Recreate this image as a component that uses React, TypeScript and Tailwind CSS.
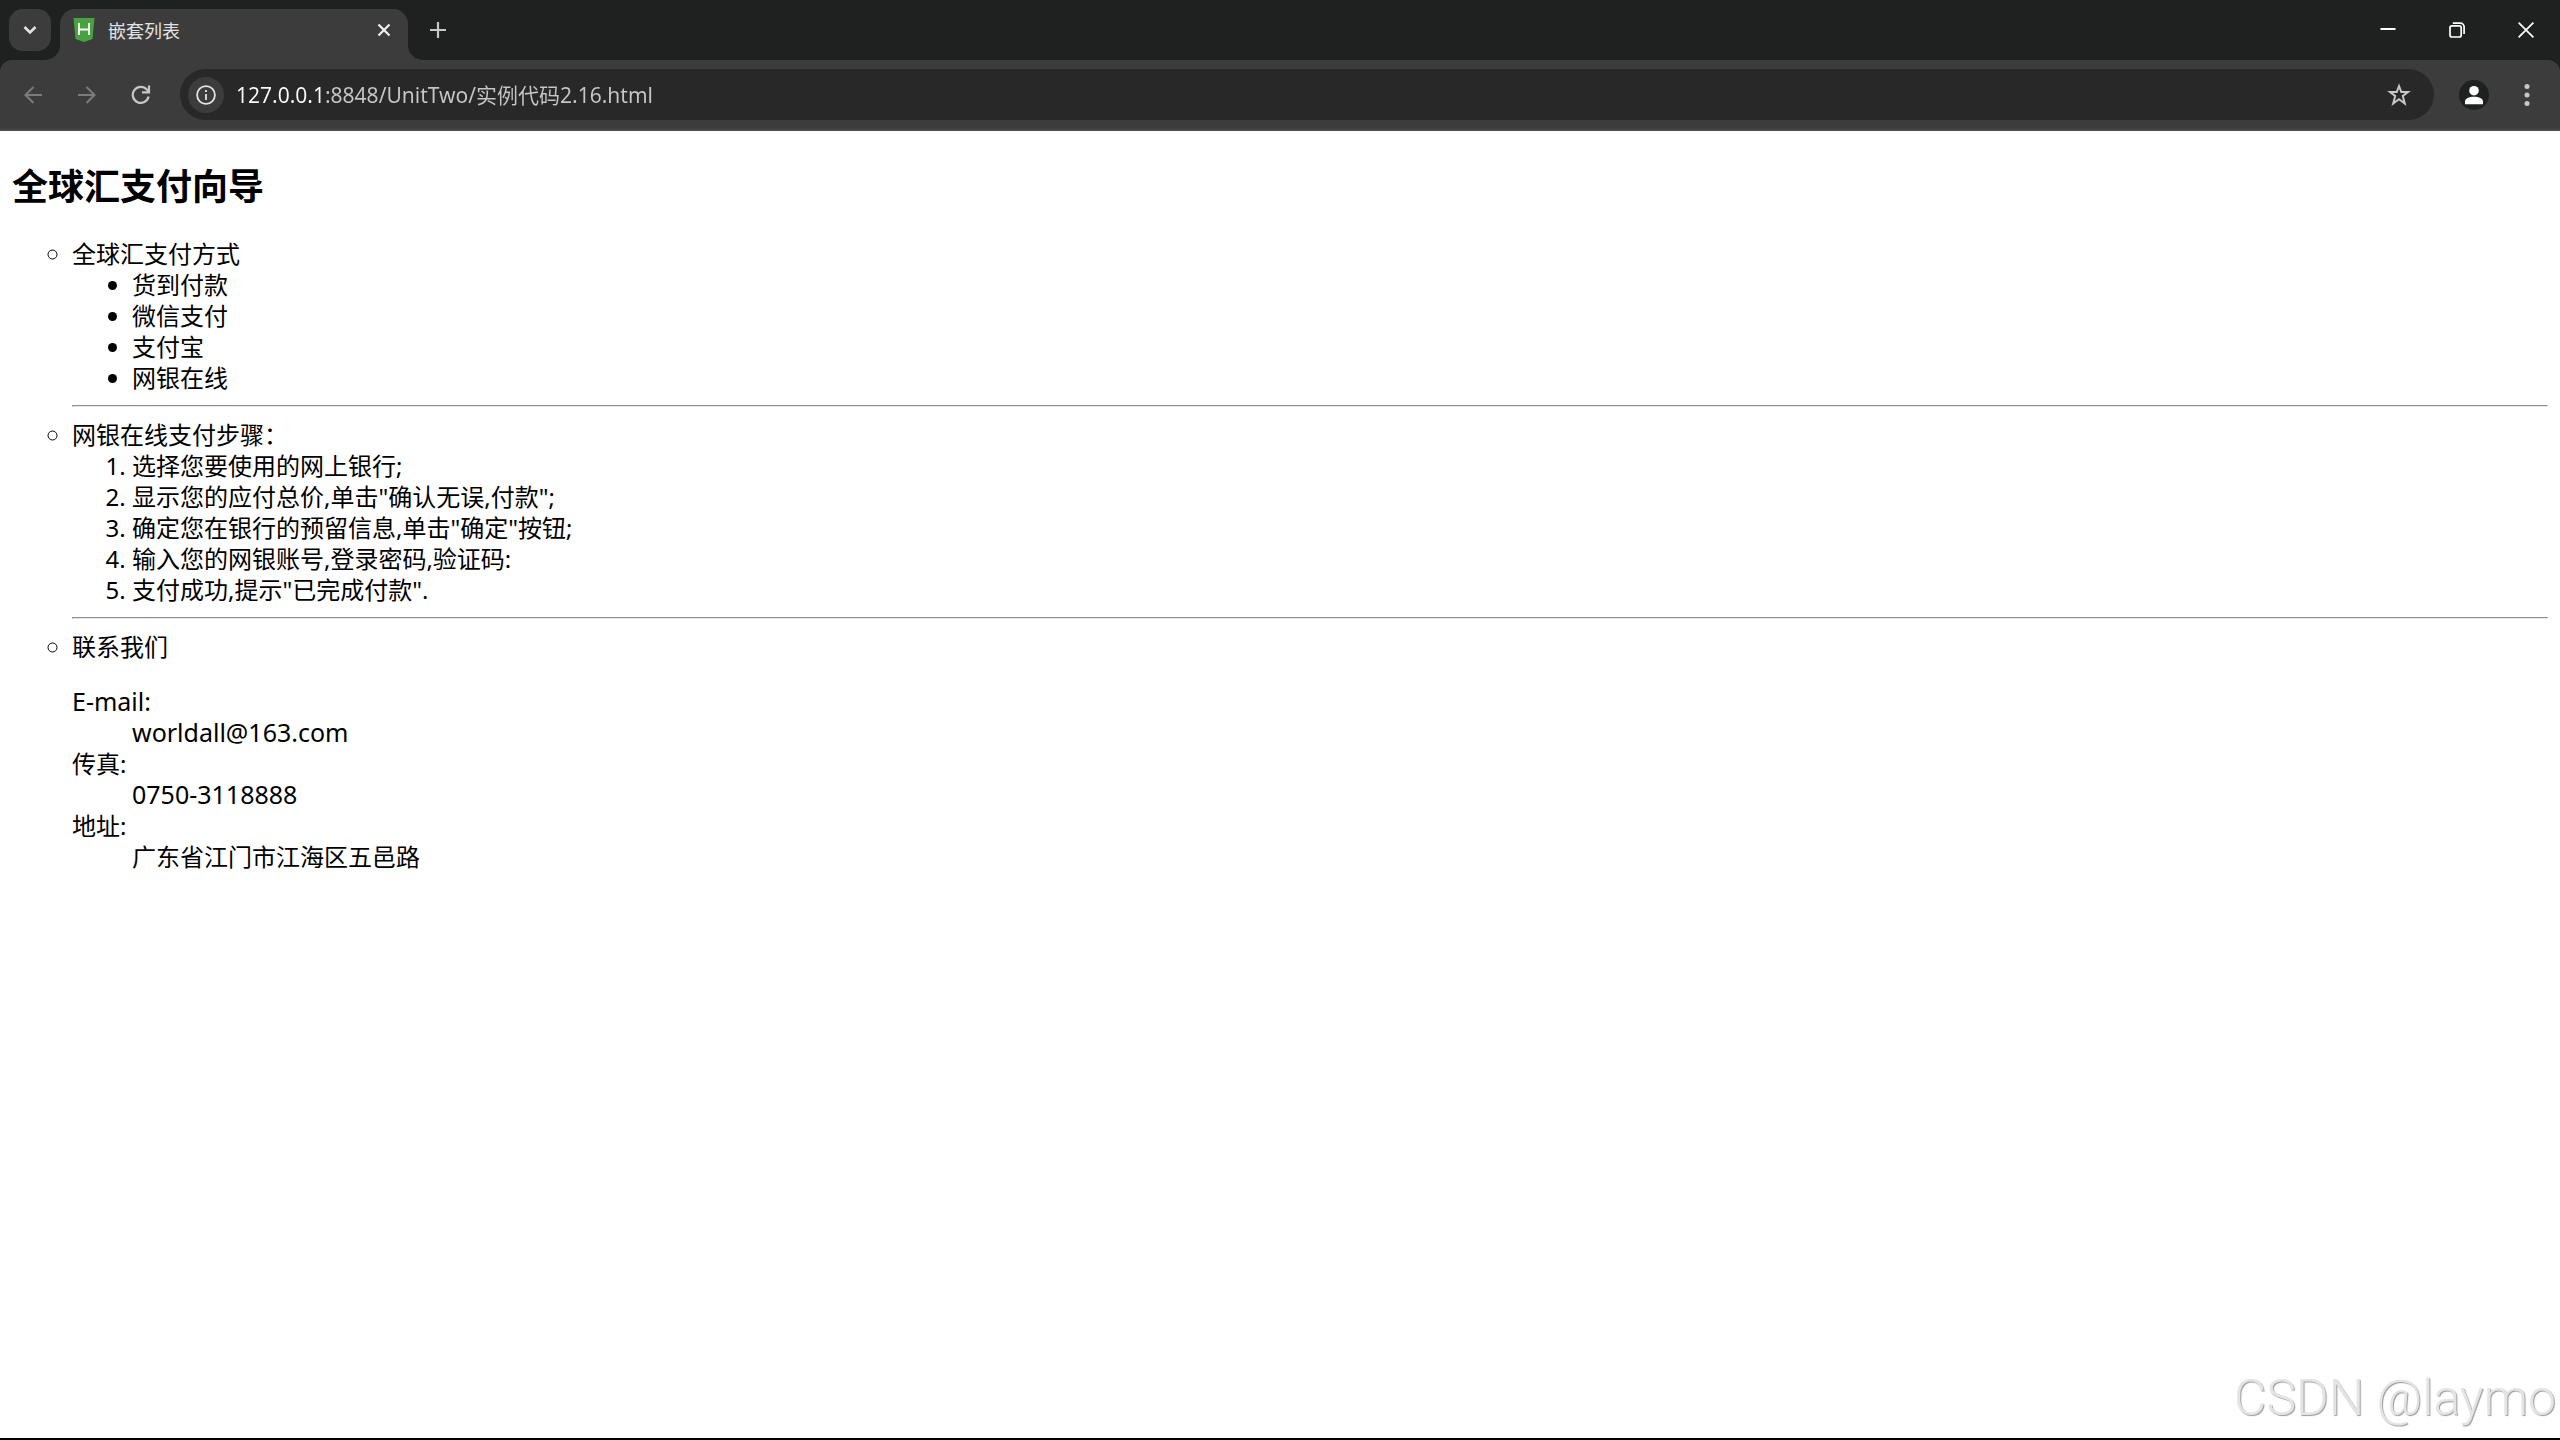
import type { ReactNode } from "react";

const methods = ["货到付款", "微信支付", "支付宝", "网银在线"];

const steps = [
  "选择您要使用的网上银行;",
  '显示您的应付总价,单击"确认无误,付款";',
  '确定您在银行的预留信息,单击"确定"按钮;',
  "输入您的网银账号,登录密码,验证码:",
  '支付成功,提示"已完成付款".',
];

function IconButton({ label, className, children }: { label: string; className: string; children: ReactNode }) {
  return (
    <button type="button" aria-label={label} className={`flex shrink-0 items-center justify-center ${className}`}>
      {children}
    </button>
  );
}

function TabFoot({ flip = false }: { flip?: boolean }) {
  return (
    <svg viewBox="0 0 15 15" className={flip ? "size-[15px] shrink-0 -scale-x-100" : "size-[15px] shrink-0"} aria-hidden="true">
      <path d="M15 0V15H0A15 15 0 0 0 15 0Z" fill="#3c3c3c" />
    </svg>
  );
}

function TabStrip() {
  return (
    <div className="flex h-[60px] items-end bg-[#1f2120]">
      <div className="flex h-[51px] w-[45px] shrink-0 items-start pl-[9px]">
        <IconButton label="搜索标签页" className="h-[42px] w-[42px] rounded-[14px] bg-[#3c3c3c]">
          <svg viewBox="0 0 14 10" className="h-[10px] w-[14px]" fill="none" stroke="#e3e3e3" strokeWidth="2.6">
            <path d="M1.5 2L7 7.5L12.5 2" />
          </svg>
        </IconButton>
      </div>
      <TabFoot />
      <div className="flex h-[51px] w-[348px] shrink-0 items-start rounded-t-[15px] bg-[#3c3c3c] pl-[13px] pr-[6px]">
        <svg viewBox="0 0 22 24" className="mt-[9px] h-6 w-[22px] shrink-0" aria-hidden="true">
          <path d="M0.5 0H21.5L19.5 21L11 24L2.5 21Z" fill="#48a23f" />
          <path d="M6 5V17M16 5V17M6 11.5H16" stroke="#ffffff" strokeWidth="1.8" fill="none" />
        </svg>
        <span className="mt-[9px] ml-[13px] flex-1 text-[18px] leading-[27px] text-[#e3e3e3]">嵌套列表</span>
        <IconButton label="关闭标签页" className="mt-[3px] size-[36px]">
          <svg viewBox="0 0 14 14" className="size-[14px]" fill="none" stroke="#f0f0f0" strokeWidth="2.2">
            <path d="M1.5 1.5L12.5 12.5M12.5 1.5L1.5 12.5" />
          </svg>
        </IconButton>
      </div>
      <TabFoot flip />
      <IconButton label="新建标签页" className="h-[60px] w-[30px]">
        <svg viewBox="0 0 16 16" className="size-4" fill="none" stroke="#c7c7c7" strokeWidth="2.2">
          <path d="M8 0V16M0 8H16" />
        </svg>
      </IconButton>
      <div className="flex-1" />
      <IconButton label="最小化" className="h-[60px] w-[69px]">
        <svg viewBox="0 0 16 16" className="size-4" fill="none" stroke="#ffffff" strokeWidth="2">
          <path d="M0.5 7H15.5" />
        </svg>
      </IconButton>
      <IconButton label="还原" className="h-[60px] w-[69px]">
        <svg viewBox="0 0 16 16" className="size-4" fill="none" stroke="#ffffff" strokeWidth="1.7">
          <rect x="1" y="3.8" width="11.2" height="11.2" rx="2" />
          <path d="M3.8 1.2H11.5A3.6 3.6 0 0 1 15.1 4.8V12" />
        </svg>
      </IconButton>
      <IconButton label="关闭" className="h-[60px] w-[69px]">
        <svg viewBox="0 0 16 16" className="size-4" fill="none" stroke="#ffffff" strokeWidth="1.7">
          <path d="M0.6 0.6L15.4 15.4M15.4 0.6L0.6 15.4" />
        </svg>
      </IconButton>
    </div>
  );
}

function Toolbar() {
  return (
    <div className="bg-[#1f2120]">
      <div className="flex h-[71px] items-center rounded-t-xl border-b-2 border-[#4a4a4a] bg-[#3c3c3c] px-[6px]">
        <IconButton label="后退" className="h-[48px] w-[54px]">
          <svg viewBox="0 0 18 18" className="size-[18px]" fill="none" stroke="#7c7c7c" strokeWidth="2">
            <path d="M18 9H1.5M9.5 1L1.5 9L9.5 17" />
          </svg>
        </IconButton>
        <IconButton label="前进" className="h-[48px] w-[54px]">
          <svg viewBox="0 0 18 18" className="size-[18px]" fill="none" stroke="#7c7c7c" strokeWidth="2">
            <path d="M0 9H16.5M8.5 1L16.5 9L8.5 17" />
          </svg>
        </IconButton>
        <IconButton label="重新加载" className="h-[48px] w-[54px]">
          <svg viewBox="0 0 20 20" className="size-5" fill="none" stroke="#c7c7c7" strokeWidth="2.2">
            <path d="M17.6 11.5A8 8 0 1 1 15.8 4.6L18 7" />
            <path d="M18 0.5V7.4H11" />
          </svg>
        </IconButton>
        <div className="ml-[12px] flex h-[51px] flex-1 items-center rounded-full bg-[#282828] pr-[14px] pl-[8px]">
          <IconButton label="查看网站信息" className="size-[36px] rounded-full bg-[#3c3c3c]">
            <svg viewBox="0 0 20 20" className="size-5" fill="none" stroke="#e3e3e3" strokeWidth="1.8">
              <circle cx="10" cy="10" r="8.9" />
              <path d="M10 9V15M10 5V7" />
            </svg>
          </IconButton>
          <input
            type="text"
            aria-label="地址栏"
            defaultValue="127.0.0.1:8848/UnitTwo/实例代码2.16.html"
            className="ml-[12px] h-[36px] min-w-0 flex-1 bg-[linear-gradient(90deg,#ffffff_89px,#c7c7c7_89px)] bg-clip-text text-[21px] leading-[36px] text-transparent outline-none"
          />
          <IconButton label="为此标签页添加书签" className="size-[42px]">
            <svg viewBox="0 0 24 24" className="size-6" fill="none" stroke="#c7c7c7" strokeWidth="2">
              <path d="M12 3L14.3 9H21L15.8 13L17.8 20.5L12 16.3L6.2 20.5L8.2 13L3 9H9.7Z" />
            </svg>
          </IconButton>
        </div>
        <IconButton label="个人资料" className="mr-[11px] ml-[25px] size-[30px] overflow-hidden rounded-full bg-[#1f2120]">
          <svg viewBox="0 0 30 30" className="size-[30px]" fill="#ffffff">
            <circle cx="15" cy="10.7" r="4.8" />
            <path d="M6 24.3V21.6C6 18.6 10 16.8 15 16.8S24 18.6 24 21.6V24.3Z" />
          </svg>
        </IconButton>
        <IconButton label="更多" className="h-[48px] w-[54px]">
          <svg viewBox="0 0 6 22" className="h-[22px] w-[6px]" fill="#c7c7c7">
            <circle cx="3" cy="2.6" r="2.5" />
            <circle cx="3" cy="11" r="2.5" />
            <circle cx="3" cy="19.4" r="2.5" />
          </svg>
        </IconButton>
      </div>
    </div>
  );
}

function Divider() {
  return <hr className="my-3 h-[2px] border border-t-[#8f8f8f] border-r-[#eeeeee] border-b-[#e6e6e6] border-l-[#9a9a9a]" />;
}

export default function App() {
  return (
    <div className="flex min-h-screen flex-col border-b-2 border-black bg-white font-['Noto_Sans','Noto_Sans_CJK_SC',sans-serif] text-black">
      <header>
        <TabStrip />
        <Toolbar />
      </header>
      <main className="relative flex-1 px-3 text-[24px] leading-[31px]">
        <h2 className="mt-8 mb-7 text-[36px] leading-[47px] font-bold">全球汇支付向导</h2>
        <ul className="list-[circle] pl-[60px]">
          <li>
            全球汇支付方式
            <ul className="list-disc pl-[60px]">
              {methods.map((m) => (
                <li key={m}>{m}</li>
              ))}
            </ul>
            <Divider />
          </li>
          <li>
            网银在线支付步骤：
            <ol className="list-decimal pl-[60px]">
              {steps.map((s) => (
                <li key={s}>{s}</li>
              ))}
            </ol>
            <Divider />
          </li>
          <li>
            联系我们
            <dl className="my-6">
              <dt className="text-[25px] leading-[31px]">E-mail:</dt>
              <dd className="ml-[60px] text-[25px] leading-[31px]">worldall@163.com</dd>
              <dt>传真:</dt>
              <dd className="ml-[60px] text-[25px] leading-[31px]">0750-3118888</dd>
              <dt>地址:</dt>
              <dd className="ml-[60px]">广东省江门市江海区五邑路</dd>
            </dl>
          </li>
        </ul>
        <div className="absolute right-1 bottom-3 font-[Roboto] text-[50px] leading-[56px] font-light text-[#e4e4e4] [text-shadow:1px_1px_1px_#999999]">
          CSDN @laymo
        </div>
      </main>
    </div>
  );
}
